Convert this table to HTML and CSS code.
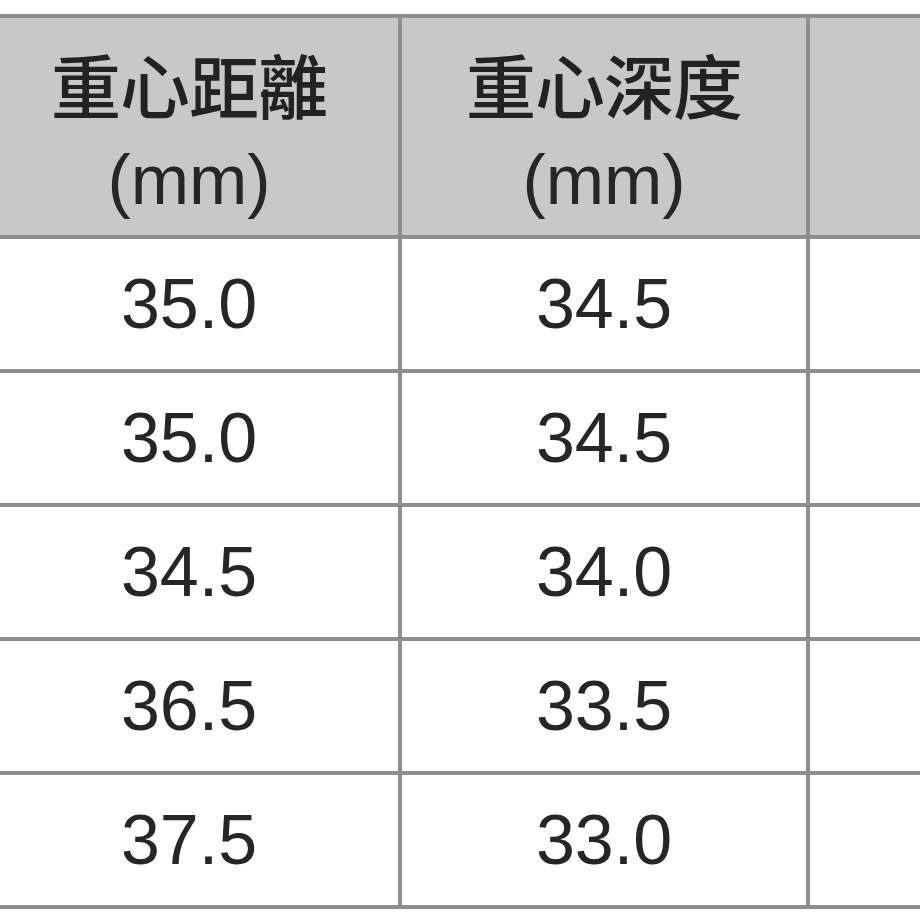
FILE: index.html
```html
<!DOCTYPE html>
<html lang="zh-Hant">
<head>
<meta charset="utf-8">
<title>重心</title>
<link rel="stylesheet" href="styles.css">
</head>
<body>
<table class="spec">
  <colgroup>
    <col class="c1">
    <col class="c2">
    <col class="c3">
  </colgroup>
  <thead>
    <tr>
      <th><span class="label">重心距離</span><br>(mm)</th>
      <th><span class="label">重心深度</span><br>(mm)</th>
      <th></th>
    </tr>
  </thead>
  <tbody>
    <tr><td>35.0</td><td>34.5</td><td></td></tr>
    <tr><td>35.0</td><td>34.5</td><td></td></tr>
    <tr><td>34.5</td><td>34.0</td><td></td></tr>
    <tr><td>36.5</td><td>33.5</td><td></td></tr>
    <tr><td>37.5</td><td>33.0</td><td></td></tr>
  </tbody>
</table>
</body>
</html>
```
FILE: styles.css
```css
html, body {
  margin: 0;
  padding: 0;
  background: #ffffff;
  overflow: hidden;
}

.spec {
  border-collapse: collapse;
  table-layout: fixed;
  width: 1130px;
  margin: 14px 0 0 -24px;
  font-family: "Liberation Sans", "Noto Sans CJK TC", sans-serif;
  font-size: 70px;
  color: #262626;
}

.c1 { width: 422px; }
.c2 { width: 408px; }
.c3 { width: 300px; }

.spec th,
.spec td {
  border: 4px solid #8e8e8e;
  text-align: center;
  vertical-align: middle;
  padding: 0;
}

.spec th {
  background: #c8c8c8;
  font-weight: normal;
  line-height: 90px;
  height: 207px;
  padding-top: 10px;
}

.label {
  font-family: "Noto Sans CJK TC", sans-serif;
  font-weight: 500;
  letter-spacing: -1px;
  color: #222222;
}

.spec td {
  line-height: 90px;
  height: 130px;
}
```
